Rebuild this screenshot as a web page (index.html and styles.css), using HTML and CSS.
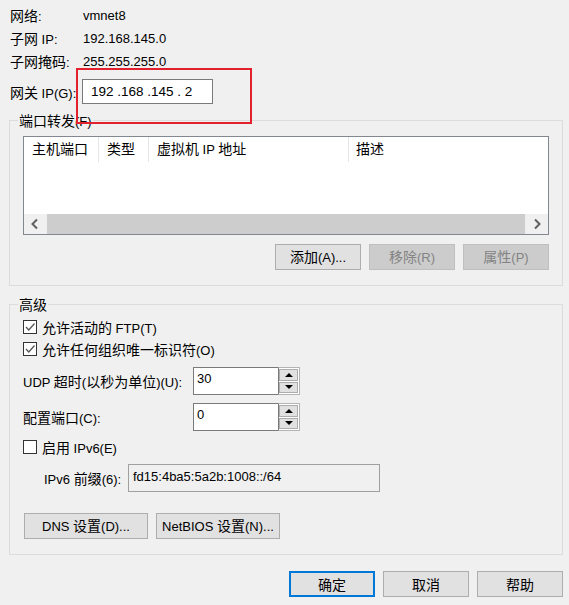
FILE: index.html
```html
<!DOCTYPE html>
<html lang="zh-CN">
<head>
<meta charset="utf-8">
<title>虚拟网络 NAT 设置</title>
<link rel="stylesheet" href="styles.css">
</head>
<body>
<div class="dialog">
  <div class="info">
    <span class="lbl"><span class="zh">网络</span>:</span><span class="val">vmnet8</span>
    <span class="lbl"><span class="zh">子网</span> IP:</span><span class="val">192.168.145.0</span>
    <span class="lbl"><span class="zh">子网掩码</span>:</span><span class="val">255.255.255.0</span>
  </div>
  <div class="gw-row">
    <span class="gw-lbl"><span class="zh">网关</span> IP(G):</span>
    <div class="ipbox">192 .168 .145 . 2</div>
  </div>
  <div class="highlight"></div>

  <fieldset class="group pf">
    <legend><span class="zh">端口转发</span>(F)</legend>
    <div class="list">
      <div class="list-head">
        <div class="col c1"><span class="zh">主机端口</span></div>
        <div class="col c2"><span class="zh">类型</span></div>
        <div class="col c3"><span class="zh">虚拟机</span> IP <span class="zh">地址</span></div>
        <div class="col c4"><span class="zh">描述</span></div>
      </div>
      <div class="list-body"></div>
      <div class="hscroll">
        <div class="sarrow"><svg width="10" height="12" viewBox="0 0 10 12"><path d="M7 1.5 L2.5 6 L7 10.5" fill="none" stroke="#606060" stroke-width="2"/></svg></div>
        <div class="thumb"></div>
        <div class="sarrow"><svg width="10" height="12" viewBox="0 0 10 12"><path d="M3 1.5 L7.5 6 L3 10.5" fill="none" stroke="#606060" stroke-width="2"/></svg></div>
      </div>
    </div>
    <div class="btn-row">
      <div class="btn"><span><span class="zh">添加</span>(A)...</span></div>
      <div class="btn disabled"><span><span class="zh">移除</span>(R)</span></div>
      <div class="btn disabled"><span><span class="zh">属性</span>(P)</span></div>
    </div>
  </fieldset>

  <fieldset class="group adv">
    <legend><span class="zh">高级</span></legend>
    <div class="check-row">
      <span class="cbox"><svg width="12" height="12" viewBox="0 0 12 12"><path d="M2 6 L4.8 9 L10.5 2.5" fill="none" stroke="#555" stroke-width="1.3"/></svg></span>
      <span><span class="zh">允许活动的</span> FTP(T)</span>
    </div>
    <div class="check-row">
      <span class="cbox"><svg width="12" height="12" viewBox="0 0 12 12"><path d="M2 6 L4.8 9 L10.5 2.5" fill="none" stroke="#555" stroke-width="1.3"/></svg></span>
      <span><span class="zh">允许任何组织唯一标识符</span>(O)</span>
    </div>
    <div class="spin-row first">
      <span class="spin-lbl">UDP <span class="zh">超时</span>(<span class="zh">以秒为单位</span>)(U):</span>
      <div class="spin">
        <div class="spin-val">30</div>
        <div class="spin-btns">
          <div class="sb"><span class="tri up"></span></div>
          <div class="sb"><span class="tri down"></span></div>
        </div>
      </div>
    </div>
    <div class="spin-row second">
      <span class="spin-lbl"><span class="zh">配置端口</span>(C):</span>
      <div class="spin">
        <div class="spin-val">0</div>
        <div class="spin-btns">
          <div class="sb"><span class="tri up"></span></div>
          <div class="sb"><span class="tri down"></span></div>
        </div>
      </div>
    </div>
    <div class="check-row ipv6">
      <span class="cbox"></span>
      <span><span class="zh">启用</span> IPv6(E)</span>
    </div>
    <div class="prefix-row">
      <span class="prefix-lbl">IPv6 <span class="zh">前缀</span>(6):</span>
      <div class="prefix-box">fd15:4ba5:5a2b:1008::/64</div>
    </div>
    <div class="adv-btns">
      <div class="btn wide"><span>DNS <span class="zh">设置</span>(D)...</span></div>
      <div class="btn wide"><span>NetBIOS <span class="zh">设置</span>(N)...</span></div>
    </div>
  </fieldset>

  <div class="footer">
    <div class="btn default"><span class="zh">确定</span></div>
    <div class="btn"><span class="zh">取消</span></div>
    <div class="btn"><span class="zh">帮助</span></div>
  </div>
</div>
</body>
</html>
```

FILE: styles.css
```css
* { box-sizing: border-box; }
html, body { margin: 0; padding: 0; }
body {
  background: #f0f0f0;
  font-family: "Liberation Sans", "Noto Sans CJK SC", sans-serif;
  font-size: 13px;
  color: #000;
  width: 569px;
  height: 605px;
  overflow: hidden;
}
.zh {
  font-family: "Noto Sans CJK SC", sans-serif;
  font-size: 14px;
}
.dialog {
  position: relative;
  padding: 4px 6px 0 9px;
}
.info {
  display: grid;
  grid-template-columns: 73px auto;
  padding-left: 1px;
}
.info .lbl, .info .val {
  height: 23px;
  line-height: 23px;
  white-space: nowrap;
  overflow: hidden;
}
.gw-row {
  display: flex;
  align-items: center;
  margin-top: 6px;
  height: 25px;
  padding-left: 1px;
}
.gw-lbl { width: 72px; white-space: nowrap; }
.ipbox {
  width: 131px;
  height: 25px;
  border: 1px solid #7a7a7a;
  background: #fff;
  padding-left: 8px;
  line-height: 23px;
  font-size: 13.5px;
}
.highlight {
  position: absolute;
  left: 76px;
  top: 68px;
  width: 176px;
  height: 56px;
  border: 2px solid #e5202e;
  pointer-events: none;
}

.group {
  margin: 0;
  min-inline-size: 0;
  border: 1px solid #dcdcdc;
  padding: 0 13px;
}
.group legend {
  padding: 0 1px;
  margin-left: -5px;
  line-height: 20px;
  height: 20px;
  white-space: nowrap;
}
.pf {
  margin-top: 6px;
  padding-top: 6px;
  padding-bottom: 15px;
}
.list {
  height: 99px;
  border: 1px solid #828790;
  background: #fff;
  display: flex;
  flex-direction: column;
}
.list-head {
  display: flex;
  height: 25px;
}
.col {
  height: 25px;
  line-height: 23px;
  padding-left: 8px;
  border-right: 1px solid #e5e5e5;
  white-space: nowrap;
}
.c1 { width: 75px; }
.c2 { width: 50px; }
.c3 { width: 200px; padding-left: 8px; }
.c4 { flex: 1; border-right: none; padding-left: 7px; }
.list-body { flex: 1; }
.hscroll {
  display: flex;
  height: 20px;
  background: #f0f0f0;
}
.sarrow {
  width: 22px;
  display: flex;
  align-items: center;
  justify-content: center;
}
.thumb {
  flex: 1;
  background: #cdcdcd;
  margin: 0 1px;
}
.btn-row {
  display: flex;
  justify-content: flex-end;
  gap: 8px;
  margin-top: 9px;
}
.btn {
  width: 86px;
  height: 26px;
  line-height: 20px;
  border: 1px solid #adadad;
  background: #e1e1e1;
  display: flex;
  align-items: center;
  justify-content: center;
  white-space: nowrap;
}
.btn.disabled {
  background: #cccccc;
  border-color: #bfbfbf;
  color: #838383;
}
.btn.default {
  border: 2px solid #0078d7;
}

.adv {
  margin-top: 8px;
  padding-top: 2px;
  padding-bottom: 15px;
}
.check-row {
  display: flex;
  align-items: center;
  height: 22px;
  gap: 5px;
  white-space: nowrap;
}
.cbox {
  width: 14px;
  height: 14px;
  border: 1px solid #333;
  background: #fff;
  display: flex;
  align-items: center;
  justify-content: center;
}
.check-row.ipv6 { margin-top: 5px; }
.spin-row {
  display: flex;
  align-items: center;
  height: 28px;
}
.spin-row.first { margin-top: 7px; }
.spin-row.second { margin-top: 8px; }
.spin-lbl { width: 170px; white-space: nowrap; }
.spin {
  display: flex;
  width: 107px;
  height: 28px;
}
.spin-val {
  flex: 1;
  background: #fff;
  border: 1px solid #7a7a7a;
  border-right: none;
  padding: 1px 0 0 3px;
  line-height: 20px;
}
.spin-btns {
  width: 22px;
  border: 1px solid #b4b4b4;
  border-left: 1px solid #7a7a7a;
  background: #fff;
  display: flex;
  flex-direction: column;
  gap: 1px;
  padding: 1px 1px 1px 0;
}
.sb {
  flex: 1;
  background: #e1e1e1;
  border: 1px solid #adadad;
  display: flex;
  align-items: center;
  justify-content: center;
}
.tri {
  width: 0;
  height: 0;
  border-left: 4px solid transparent;
  border-right: 4px solid transparent;
}
.tri.up { border-bottom: 4px solid #000; }
.tri.down { border-top: 4px solid #000; }

.prefix-row {
  display: flex;
  align-items: center;
  margin-top: 6px;
  height: 28px;
  padding-left: 21px;
}
.prefix-lbl { width: 84px; white-space: nowrap; }
.prefix-box {
  width: 252px;
  height: 28px;
  border: 1px solid #a0a0a0;
  background: #f0f0f0;
  padding: 1px 0 0 4px;
  line-height: 22px;
}
.adv-btns {
  display: flex;
  gap: 8px;
  margin-top: 21px;
  padding-left: 1px;
}
.btn.wide { width: 124px; }

.footer {
  display: flex;
  justify-content: flex-end;
  gap: 8px;
  margin-top: 16px;
}
```
